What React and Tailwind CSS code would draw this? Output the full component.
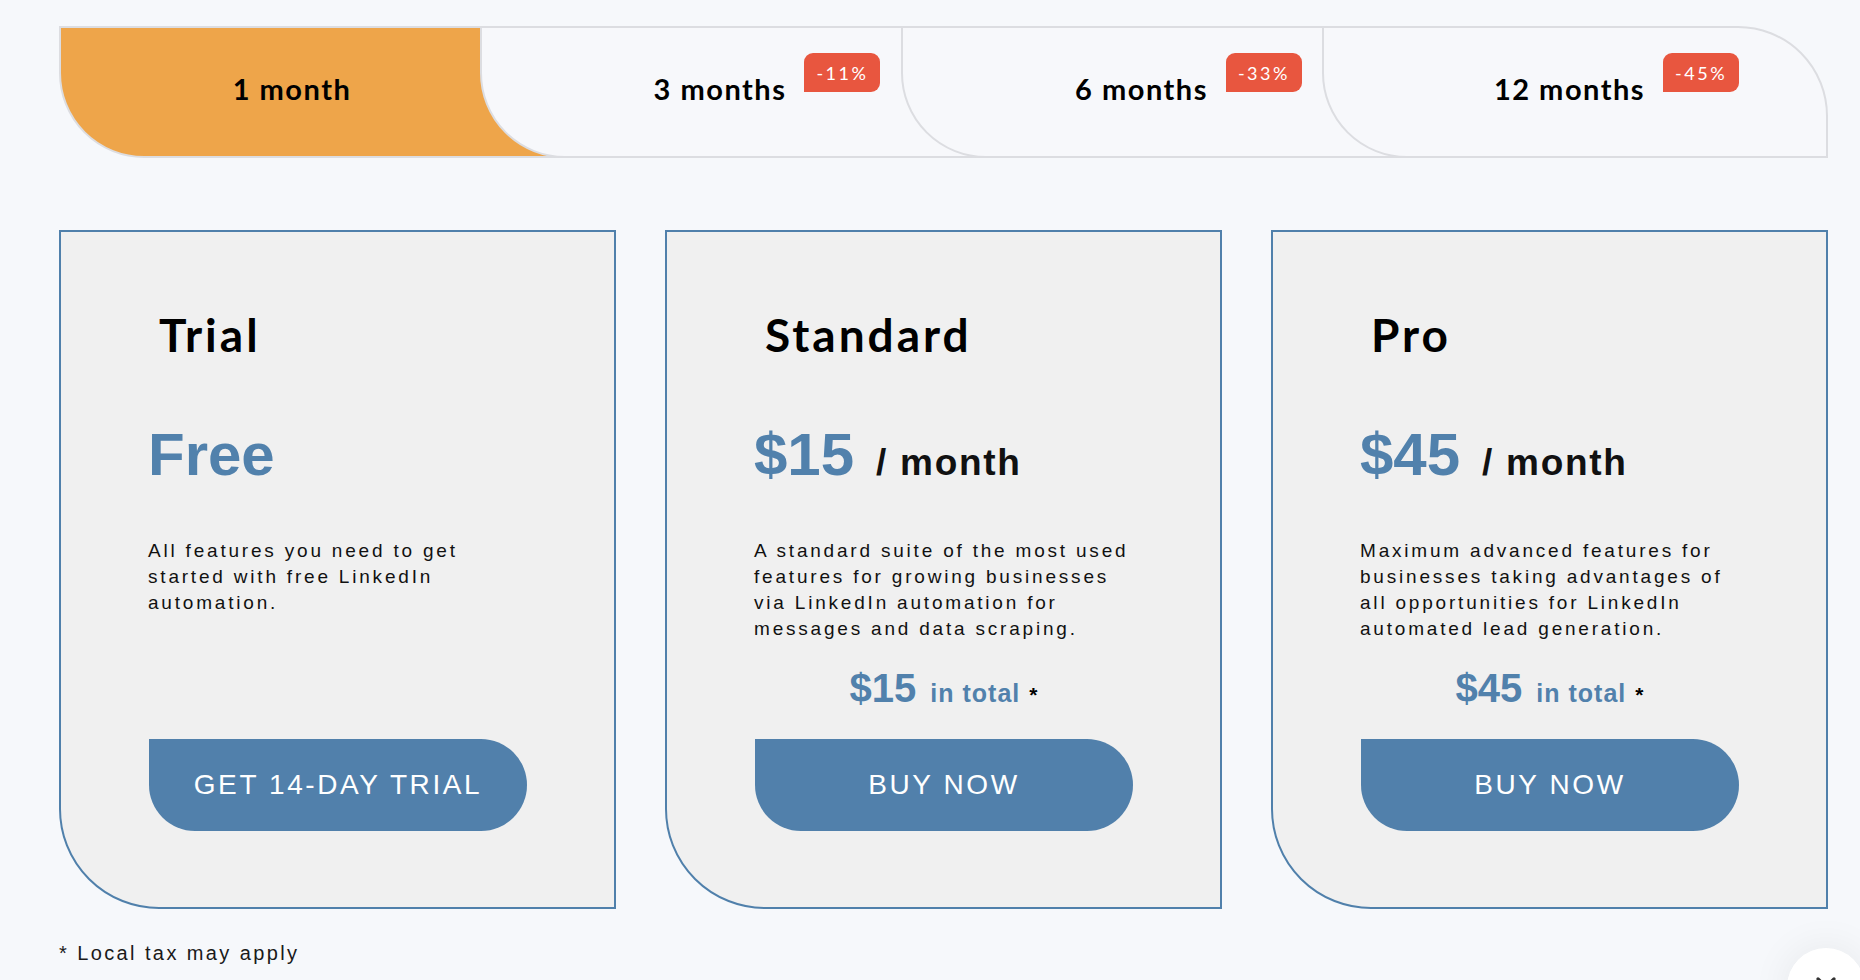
import React from 'react';
import { ChevronDown } from 'lucide-react';

const tabs = [
  { label: '1 month', pl: 'pl-[41px]', active: true },
  { label: '3 months', badge: '-11%', pl: 'pl-[55px]' },
  { label: '6 months', badge: '-33%', pl: 'pl-[56px]' },
  { label: '12 months', badge: '-45%', pl: 'pl-[70px]' },
];

const plans = [
  {
    title: 'Trial',
    price: 'Free',
    desc: 'All features you need to get started with free LinkedIn automation.',
    cta: 'GET 14-DAY TRIAL',
  },
  {
    title: 'Standard',
    price: '$15',
    perMonth: true,
    desc: 'A standard suite of the most used features for growing businesses via LinkedIn automation for messages and data scraping.',
    total: '$15',
    cta: 'BUY NOW',
  },
  {
    title: 'Pro',
    price: '$45',
    perMonth: true,
    desc: 'Maximum advanced features for businesses taking advantages of all opportunities for LinkedIn automated lead generation.',
    total: '$45',
    cta: 'BUY NOW',
  },
];

function Tab({ tab, last }) {
  return (
    <div
      className={`relative h-[132px] w-[506px] shrink-0 rounded-bl-[85px] border-2 border-[#dcdde1] ${
        tab.active ? 'bg-[#eea54a]' : 'bg-[#f7f8fb]'
      } ${last ? 'rounded-tr-[90px]' : '-mr-[85px]'}`}
    >
      <div className={`flex h-full w-[421px] items-start justify-center pt-[46px] ${tab.pl}`}>
        <span className="relative whitespace-nowrap text-[29px] font-bold leading-none tracking-[1.5px] text-black [font-family:Lato,sans-serif]">
          {tab.label}
          {tab.badge && (
            <span className="absolute left-full top-[-21px] ml-[18px] flex h-[39px] w-[76px] items-center justify-center rounded-[9px] rounded-bl-none bg-[#e8563f] text-[18px] font-normal tracking-[2.5px] text-white">
              {tab.badge}
            </span>
          )}
        </span>
      </div>
    </div>
  );
}

function PlanCard({ plan }) {
  return (
    <div className="flex h-[679px] w-[557px] shrink-0 flex-col rounded-bl-[100px] border-2 border-[#5080ab] bg-[#f0f0f0] px-[87px] pt-[80px] pb-[76px] [font-family:'Liberation_Sans',Arial,sans-serif]">
      <h2 className="ml-[11px] text-[46px] font-bold leading-none tracking-[3px] text-black [font-family:Lato,sans-serif]">
        {plan.title}
      </h2>
      <div className="mt-[67px] flex items-baseline gap-[22px]">
        <span className="text-[60px] font-bold leading-none text-[#5181ac]">{plan.price}</span>
        {plan.perMonth && (
          <span className="text-[37px] font-bold leading-none tracking-[1.7px] text-[#111]">/ month</span>
        )}
      </div>
      <p className="mt-[53px] text-[19px] leading-[26px] tracking-[2.8px] text-[#111]">{plan.desc}</p>
      {plan.total && (
        <div className="mt-[26px] flex items-baseline justify-center leading-none">
          <span className="text-[40px] font-bold text-[#5181ac]">{plan.total}</span>
          <span className="ml-[14px] text-[25px] font-bold tracking-[1px] text-[#5181ac]">in total</span>
          <span className="ml-[9px] text-[21px] font-bold text-black">*</span>
        </div>
      )}
      <button className="ml-px mt-auto h-[92px] w-[378px] rounded-[46px] rounded-tl-none bg-[#5180ab] text-[28px] tracking-[2.6px] text-white">
        {plan.cta}
      </button>
    </div>
  );
}

export default function App() {
  return (
    <div className="min-h-screen overflow-hidden bg-[#f6f8fb] pt-[26px] pl-[59px]">
      <div className="flex">
        {tabs.map((t, i) => (
          <Tab key={t.label} tab={t} last={i === tabs.length - 1} />
        ))}
      </div>

      <div className="mt-[72px] flex gap-[49px]">
        {plans.map((p) => (
          <PlanCard key={p.title} plan={p} />
        ))}
      </div>

      <p className="mt-[32px] text-[20px] leading-[24px] tracking-[2.4px] text-[#1a1a1a] [font-family:'Liberation_Sans',Arial,sans-serif]">
        * Local tax may apply
      </p>

      <div className="fixed right-[-5px] bottom-[-46px] flex h-[78px] w-[78px] justify-center rounded-full bg-white pt-[19px] shadow-[0_0_40px_rgba(0,0,0,0.07)]">
        <ChevronDown size={32} strokeWidth={2.5} className="text-[#333]" />
      </div>
    </div>
  );
}
